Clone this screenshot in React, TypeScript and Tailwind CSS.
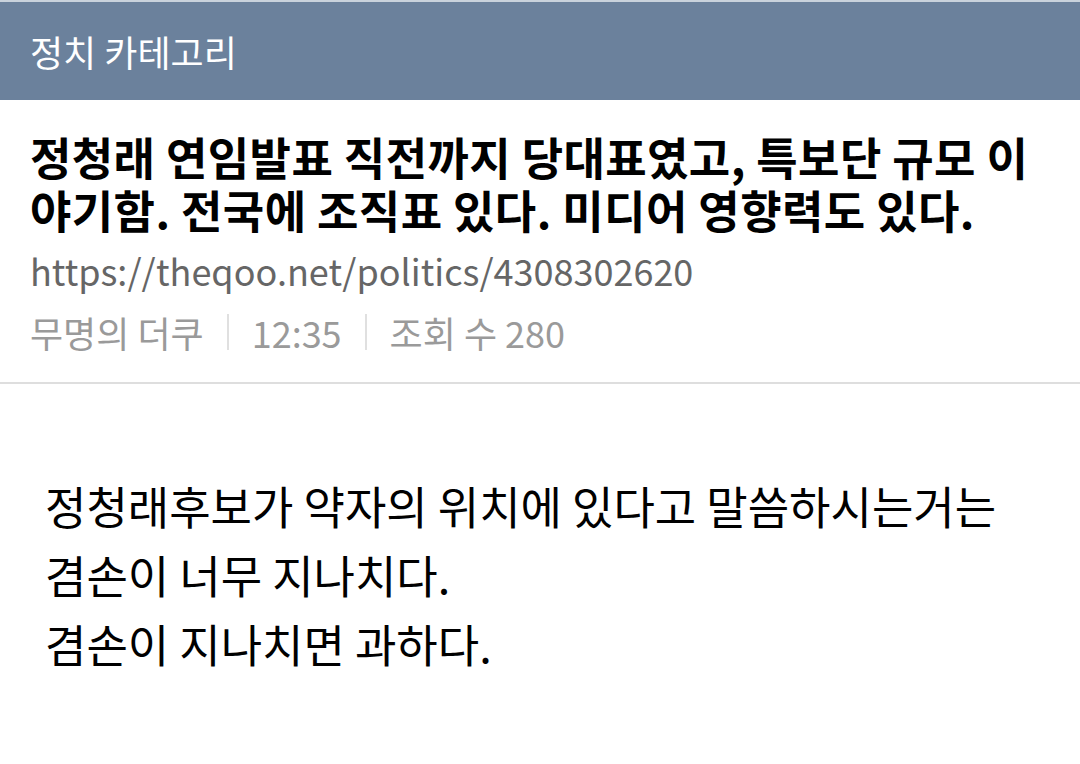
import React from 'react';

const font = { fontFamily: '"Noto Sans CJK KR", "Noto Sans", sans-serif' };

const App: React.FC = () => {
    return (
        <div className="w-[1080px] h-[764px] bg-white overflow-hidden" style={font}>
            {/* Category bar */}
            <div className="border-t-2 border-[#c9d2dc] bg-[#6b819c] h-[100px] flex items-center px-[30px]">
                <span className="text-white text-[36px] leading-none">정치 카테고리</span>
            </div>

            {/* Post header */}
            <div className="px-[30px] pt-[30px] pb-[28px] border-b-2 border-[#dedede]">
                <h1 className="text-[45px] font-bold leading-[53px] tracking-[0.4px] text-black">
                    정청래 연임발표 직전까지 당대표였고, 특보단 규모 이야기함. 전국에 조직표 있다. 미디어 영향력도 있다.
                </h1>
                <div className="mt-[12px] text-[36px] leading-[44px] text-[#666666]">
                    https://theqoo.net/politics/4308302620
                </div>
                <div className="mt-[18px] flex items-center text-[36px] leading-[44px] text-[#9a9a9a]">
                    <span>무명의 더쿠</span>
                    <span className="mx-[23px] w-[2px] h-[36px] bg-[#e0e0e0]"></span>
                    <span>12:35</span>
                    <span className="mx-[23px] w-[2px] h-[36px] bg-[#e0e0e0]"></span>
                    <span>조회 수 280</span>
                </div>
            </div>

            {/* Body */}
            <div className="px-[45px] pt-[87px] text-[45px] leading-[69px] text-black">
                <p>정청래후보가 약자의 위치에 있다고 말씀하시는거는</p>
                <p>겸손이 너무 지나치다.</p>
                <p>겸손이 지나치면 과하다.</p>
            </div>
        </div>
    );
};

export default App;
